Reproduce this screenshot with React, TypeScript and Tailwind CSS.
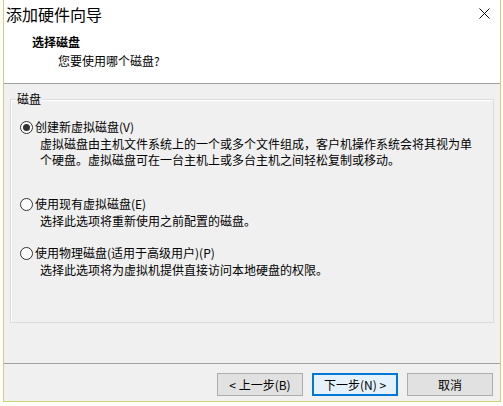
const options = [
  {
    label: "创建新虚拟磁盘(V)",
    lines: [
      "虚拟磁盘由主机文件系统上的一个或多个文件组成，客户机操作系统会将其视为单",
      "个硬盘。虚拟磁盘可在一台主机上或多台主机之间轻松复制或移动。",
    ],
    checked: true,
    gap: "mt-[19px]",
  },
  {
    label: "使用现有虚拟磁盘(E)",
    lines: ["选择此选项将重新使用之前配置的磁盘。"],
    checked: false,
    gap: "mt-[28px]",
  },
  {
    label: "使用物理磁盘(适用于高级用户)(P)",
    lines: ["选择此选项将为虚拟机提供直接访问本地硬盘的权限。"],
    checked: false,
    gap: "mt-[16px]",
  },
];

function Radio({ checked }: { checked: boolean }) {
  return (
    <span className="w-[13px] h-[13px] rounded-full border border-[#333333] bg-white flex items-center justify-center shrink-0">
      {checked && <span className="w-[7px] h-[7px] rounded-full bg-[#333333]" />}
    </span>
  );
}

export default function App() {
  return (
    <div
      className="w-[503px] h-[406px] bg-white pl-[3px] text-black text-[12px]"
      style={{ fontFamily: '"Segoe UI", "Noto Sans CJK SC", "Noto Sans", sans-serif' }}
    >
      <div className="w-[498px] h-[402px] border-l border-r border-b border-[#cdd36e] flex flex-col">
        {/* header */}
        <div className="h-[84px] bg-white border-b border-[#a0a0a0]">
          <div className="h-[28px] flex items-center justify-between pl-[2px] pr-[10px]">
            <span className="text-[16px] leading-[20px]">添加硬件向导</span>
            <svg width="11" height="11" viewBox="0 0 11 11" className="mt-[-2px]">
              <path d="M0.5 0.5 L10.5 10.5 M10.5 0.5 L0.5 10.5" stroke="#111" strokeWidth="1" />
            </svg>
          </div>
          <div className="pl-[28px] mt-[6px] font-bold leading-[16px]">选择磁盘</div>
          <div className="pl-[54px] mt-[3px] leading-[16px]">您要使用哪个磁盘?</div>
        </div>

        {/* body */}
        <div className="h-[280px] bg-[#f0f0f0] border-b border-[#a0a0a0] px-[6px] pt-[15px]">
          <div className="relative h-[224px] border border-[#dcdcdc] shadow-[inset_1px_1px_0_#ffffff]">
            <span className="absolute left-[5px] top-[-9px] px-[1px] bg-[#f0f0f0] leading-[16px]">
              磁盘
            </span>
            {options.map((o) => (
              <div key={o.label} className={o.gap}>
                <div className="flex items-center gap-[2px] pl-[9px] h-[16px]">
                  <Radio checked={o.checked} />
                  <span className="leading-[16px]">{o.label}</span>
                </div>
                <div className="pl-[29px] mt-[1px] leading-[16px]">
                  {o.lines.map((l) => (
                    <div key={l}>{l}</div>
                  ))}
                </div>
              </div>
            ))}
          </div>
        </div>

        {/* footer */}
        <div className="flex-1 bg-[#f0f0f0] flex justify-end items-start pt-[9px] pr-[7px] gap-[9px]">
          <button className="w-[86px] h-[23px] bg-[#e1e1e1] border border-[#adadad] leading-[20px]">
            &lt; 上一步(B)
          </button>
          <button className="w-[86px] h-[23px] bg-[#e5f1fb] border-2 border-[#0078d7] leading-[18px]">
            下一步(N) &gt;
          </button>
          <button className="w-[86px] h-[23px] bg-[#e1e1e1] border border-[#adadad] leading-[20px]">
            取消
          </button>
        </div>
      </div>
    </div>
  );
}
